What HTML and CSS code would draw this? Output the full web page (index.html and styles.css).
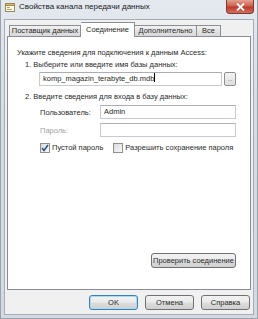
FILE: index.html
```html
<!DOCTYPE html>
<html>
<head>
  <title>Свойства канала передачи данных</title>
  <link rel="stylesheet" href="styles.css">
</head>
<body>
  <div class="window">
    <div class="titlebar">
      <svg class="app-icon" width="10" height="10" viewBox="0 0 10 10">
        <rect x="0.5" y="1.5" width="9" height="8" fill="#fff" stroke="#9a8a5a"/>
        <rect x="0.5" y="1.5" width="9" height="2" fill="#e8b84a" stroke="#9a8a5a"/>
        <rect x="2" y="5" width="3" height="1" fill="#c9a040"/>
        <rect x="2" y="7" width="5" height="1" fill="#c9a040"/>
      </svg>
      <span class="title">Свойства канала передачи данных</span>
      <div class="close-btn">
        <svg width="9" height="8" viewBox="0 0 9 8">
          <path d="M1 0.5 L8 7.5 M8 0.5 L1 7.5" stroke="#fff" stroke-width="1.8"/>
        </svg>
      </div>
    </div>

    <div class="client">
      <div class="tabs">
        <div class="tab tab-provider">Поставщик данных</div>
        <div class="tab tab-connection active">Соединение</div>
        <div class="tab tab-advanced">Дополнительно</div>
        <div class="tab tab-all">Все</div>
      </div>

      <div class="panel">
        <div class="line">Укажите сведения для подключения к данным Access:</div>
        <div class="line step">1. Выберите или введите имя базы данных:</div>
        <div class="file-row">
          <div class="field file-field">komp_magazin_terabyte_db.mdb<span class="caret"></span></div>
          <div class="browse-btn">...</div>
        </div>

        <div class="line step step-two">2. Введите сведения для входа в базу данных:</div>
        <div class="form-row user-row">
          <span class="label">Пользователь:</span>
          <div class="field">Admin</div>
        </div>
        <div class="form-row pass-row">
          <span class="label disabled">Пароль:</span>
          <div class="field"></div>
        </div>
        <div class="check-row">
          <span class="checkbox checked">
            <svg width="8" height="8" viewBox="0 0 8 8">
              <path d="M1 4 L3 6.5 L7 1" fill="none" stroke="#2c4f8a" stroke-width="1.5"/>
            </svg>
          </span>
          <span class="check-label">Пустой пароль</span>
          <span class="checkbox second"></span>
          <span class="check-label">Разрешить сохранение пароля</span>
        </div>

        <div class="test-row">
          <div class="button test-btn">Проверить соединение</div>
        </div>
      </div>

      <div class="footer">
        <div class="button default">OK</div>
        <div class="button">Отмена</div>
        <div class="button">Справка</div>
      </div>
    </div>
  </div>
</body>
</html>
```

FILE: styles.css
```css
body {
  margin: 0;
  padding: 0;
  background-color: #ffffff;
  font-family: "Liberation Sans", Arial, sans-serif;
  font-size: 7.5px;
  color: #2a2a2a;
}

.window {
  width: 258px;
  height: 319px;
  box-sizing: border-box;
  padding: 0 3px 3px 3px;
  display: flex;
  flex-direction: column;
  background: linear-gradient(#e4e9ef, #d6dde5 30%, #d3dae2);
  border-left: 1px solid #9aa2ab;
  border-right: 1px solid #9aa2ab;
  border-bottom: 1px solid #9aa2ab;
}

.titlebar {
  height: 19px;
  display: flex;
  align-items: flex-start;
  position: relative;
}

.app-icon {
  margin: 2px 0 0 1px;
}

.title {
  margin: 1px 0 0 4px;
  font-size: 8px;
  line-height: 12px;
  color: #1a1a1a;
}

.close-btn {
  position: absolute;
  top: 0;
  right: 0;
  width: 28px;
  height: 14px;
  box-sizing: border-box;
  display: flex;
  align-items: center;
  justify-content: center;
  background: linear-gradient(#e4a193, #d0604c 45%, #c0392b 55%, #d4705c);
  border: 1px solid #7a3a32;
  border-top: none;
  border-radius: 0 0 4px 4px;
}

.client {
  flex: 1;
  display: flex;
  flex-direction: column;
  background-color: #f0f0f0;
  border: 1px solid #a5acb5;
  padding: 2px 2px 4px 2px;
}

.tabs {
  display: flex;
  align-items: flex-end;
  padding-left: 2px;
  height: 14px;
  position: relative;
  z-index: 1;
}

.tab {
  height: 11px;
  box-sizing: border-box;
  border: 1px solid #8c8e94;
  border-bottom: none;
  border-left: none;
  background: linear-gradient(#f2f2f2, #e3e3e3 50%, #d9d9d9);
  line-height: 10px;
  text-align: center;
}

.tab-provider {
  width: 72px;
  border-left: 1px solid #8c8e94;
}

.tab-connection {
  width: 54px;
}

.tab-advanced {
  width: 62px;
}

.tab-all {
  width: 24px;
}

.tab.active {
  height: 15px;
  margin-bottom: -1px;
  background: #ffffff;
  line-height: 13px;
}

.panel {
  flex: 1;
  display: flex;
  flex-direction: column;
  background-color: #ffffff;
  border: 1px solid #898c95;
  padding: 11px 14px 21px 9px;
}

.line {
  line-height: 10px;
  white-space: nowrap;
}

.step {
  margin: 2px 0 0 8px;
}

.step-two {
  margin-top: 6px;
}

.file-row {
  display: flex;
  margin: 2px 0 0 22px;
  gap: 2px;
}

.field {
  height: 14px;
  box-sizing: border-box;
  border: 1px solid #c6cbd2;
  border-top-color: #abadb3;
  background-color: #fff;
  line-height: 12px;
  padding-left: 3px;
  white-space: nowrap;
}

.file-field {
  flex: 1;
}

.caret {
  display: inline-block;
  width: 1px;
  height: 9px;
  background-color: #000;
  vertical-align: -1px;
}

.browse-btn {
  width: 12px;
  height: 14px;
  box-sizing: border-box;
  border: 1px solid #8e8f8f;
  border-radius: 2px;
  background: linear-gradient(#f4f4f4, #dedede);
  font-size: 6px;
  line-height: 12px;
  text-align: center;
  color: #555;
}

.form-row {
  display: flex;
  align-items: center;
  margin-left: 23px;
}

.user-row {
  margin-top: 3px;
}

.pass-row {
  margin-top: 4px;
}

.form-row .label {
  width: 60px;
}

.form-row .field {
  flex: 1;
}

.label.disabled {
  color: #a3a3a3;
}

.check-row {
  display: flex;
  align-items: center;
  margin: 5px 0 0 23px;
  height: 11px;
}

.checkbox {
  width: 10px;
  height: 10px;
  box-sizing: border-box;
  border: 1px solid #8f8f8f;
  background: linear-gradient(135deg, #dcdcdc, #f8f8f8);
  display: flex;
  align-items: center;
  justify-content: center;
}

.checkbox.second {
  margin-left: 10px;
}

.check-label {
  margin-left: 2px;
  white-space: nowrap;
}

.test-row {
  margin-top: auto;
  display: flex;
  justify-content: flex-end;
}

.button {
  height: 15px;
  box-sizing: border-box;
  border: 1px solid #707070;
  border-radius: 3px;
  background: linear-gradient(#f2f2f2, #ebebeb 45%, #dddddd 55%, #cfcfcf);
  line-height: 13px;
  text-align: center;
  white-space: nowrap;
}

.test-btn {
  width: 85px;
}

.footer {
  display: flex;
  justify-content: flex-end;
  gap: 7px;
  margin-top: 5px;
  padding-right: 1px;
}

.footer .button {
  width: 49px;
}

.button.default {
  border-color: #3c7fb1;
  box-shadow: inset 0 0 0 1px #a8dcf5;
}
```
